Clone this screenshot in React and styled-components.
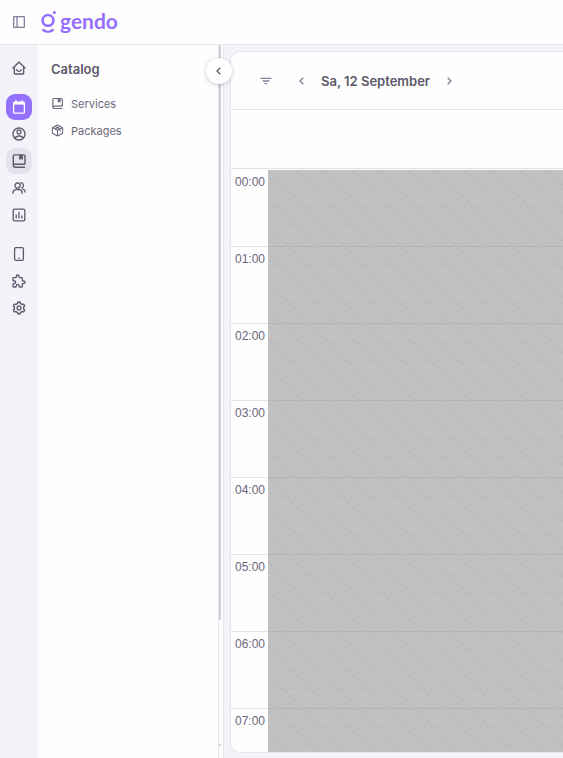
import React from 'react';
import styled, { createGlobalStyle } from 'styled-components';
import {
  BiChevronLeft,
  BiChevronRight,
  BiCog,
  BiDockLeft,
  BiFilter,
  BiHomeSmile,
} from 'react-icons/bi';
import { RiAccountCircleLine } from 'react-icons/ri';
import { TbPuzzle } from 'react-icons/tb';

const GlobalStyle = createGlobalStyle`
  * {
    box-sizing: border-box;
  }

  body {
    margin: 0;
    background-color: #f4f3f9;
    color: #5d596c;
    font-family: Inter, 'Liberation Sans', sans-serif;
    font-size: 13px;
  }

  button {
    padding: 0;
    border: 0;
    background: none;
    color: inherit;
    font: inherit;
    cursor: pointer;
  }
`;

const Page = styled.div`
  display: flex;
  flex-direction: column;
  height: 100vh;
  overflow: hidden;
`;

const TopBar = styled.header`
  display: flex;
  flex: none;
  align-items: center;
  gap: 14px;
  height: 45px;
  padding: 0 11px;
  border-bottom: 1px solid #e8e7ec;
  background-color: #fefefe;
`;

const IconButton = styled.button`
  display: flex;
  align-items: center;
  justify-content: center;
  width: 16px;
  height: 16px;
  color: #85819a;
`;

const LogoLink = styled.a`
  display: flex;
  align-items: center;
  gap: 2px;
  color: #9570fe;
  font-family: Lato, sans-serif;
  font-size: 21px;
  font-weight: 700;
  line-height: 24px;
  text-decoration: none;
`;

const LogoText = styled.span`
  padding-bottom: 2px;
`;

const Body = styled.div`
  display: flex;
  flex: 1;
  min-height: 0;
`;

const Rail = styled.nav`
  display: flex;
  flex: none;
  flex-direction: column;
  align-items: center;
  gap: 1px;
  width: 38px;
  padding-top: 10px;
`;

const RailLink = styled.a`
  display: flex;
  align-items: center;
  justify-content: center;
  width: 26px;
  height: 26px;
  margin-top: ${props => (props.$spaced ? '12px' : '0')};
  border-radius: 9px;
  background-color: ${props => props.$background || 'transparent'};
  color: ${props => props.$color || '#5d596c'};
`;

const SidePanel = styled.aside`
  position: relative;
  display: flex;
  flex: none;
  width: 186px;
  background-color: #fefefe;
`;

const PanelContent = styled.div`
  flex: 1;
  padding: 15px 13px;
`;

const PanelTitle = styled.h2`
  margin: 0 0 12px;
  font-size: 13px;
  font-weight: 600;
  line-height: 18px;
`;

const PanelLink = styled.a`
  display: flex;
  align-items: center;
  gap: 7px;
  height: 27px;
  color: #6b677b;
  font-size: 11px;
  text-decoration: none;
`;

const ScrollTrack = styled.div`
  display: flex;
  flex-direction: column;
  justify-content: space-between;
  width: 6px;
  padding-bottom: 12px;
  border-right: 1px solid #e6e5ee;
  border-left: 1px solid #e2e1e8;
`;

const ScrollThumb = styled.div`
  width: 2px;
  height: 82%;
  border-radius: 2px;
  background-color: #cfcdd8;
`;

const ScrollArrow = styled.div`
  width: 2px;
  height: 2px;
  background-color: #cfcdd8;
`;

const CollapseButton = styled.button`
  position: absolute;
  top: 13px;
  right: -8px;
  display: flex;
  align-items: center;
  justify-content: center;
  width: 26px;
  height: 26px;
  border-radius: 50%;
  background-color: #ffffff;
  box-shadow: 0 1px 4px rgba(75, 70, 92, 0.3);
`;

const Main = styled.main`
  display: flex;
  flex: 1;
  min-width: 0;
  padding: 6px 0 5px 6px;
`;

const Calendar = styled.section`
  display: flex;
  flex: 1;
  flex-direction: column;
  min-width: 0;
  overflow: hidden;
  border: 1px solid #e6e5ec;
  border-right: 0;
  border-radius: 10px 0 0 10px;
  background-color: #fefefe;
`;

const CalendarBar = styled.div`
  display: flex;
  flex: none;
  align-items: center;
  height: 58px;
  padding-left: 27px;
  border-bottom: 1px solid #e6e5ec;
`;

const DateNav = styled.div`
  display: flex;
  align-items: center;
  gap: 11px;
  margin-left: 20px;
`;

const DateTitle = styled.h1`
  margin: 0;
  font-size: 13px;
  font-weight: 600;
  line-height: 20px;
  white-space: nowrap;
`;

const StaffRow = styled.div`
  flex: none;
  height: 59px;
  border-bottom: 1px solid #e2e1e6;
`;

const Schedule = styled.div`
  display: grid;
  flex: 1;
  grid-template-columns: 37px 1fr;
  min-height: 0;
  padding-top: 1px;
  overflow: hidden;
`;

const Hour = styled.div`
  height: 77px;
  padding: 4px 0 0 4px;
  border-bottom: 1px solid #e4e3e8;
  color: #6b677b;
  font-family: 'Liberation Sans', sans-serif;
  font-size: 12px;
  line-height: 16px;
`;

const ClosedDay = styled.div`
  background-color: #c1c1c1;
  background-image: linear-gradient(
    45deg,
    transparent 47%,
    rgba(0, 0, 0, 0.035) 49% 51%,
    transparent 53%
  );
  background-size: 28px 28px;
`;

const ClosedHour = styled.div`
  display: grid;
  grid-template-rows: repeat(4, 1fr);
  height: 77px;
  border-bottom: 1px solid #b5b5b5;
`;

const Slot = styled.div`
  border-bottom: 1px dashed #bbbbbb;

  &:last-child {
    border-bottom: 0;
  }
`;

const LogoMark = () => (
  <svg width='17' height='24' viewBox='0 0 17 24' fill='none' stroke='currentColor' aria-hidden='true'>
    <circle cx='7' cy='10.4' r='5.4' strokeWidth='2.6' />
    <path d='M2.2 20c2.8 2.2 6.800 2.200 9.600 0' strokeWidth='2.400' strokeLinecap='round' />
    <circle cx='13.400' cy='2.400' r='1.500' fill='currentColor' stroke='none' />
  </svg>
);

const CalendarIcon = () => (
  <svg width='16' height='16' viewBox='0 0 16 16' fill='none' stroke='currentColor' aria-hidden='true'>
    <rect x='2.6' y='3.2' width='10.8' height='11' rx='1' strokeWidth='1.3' />
    <path d='M2.6 4.4h10.8' strokeWidth='2.4' />
    <path d='M5 1.3v3M11 1.3v3' strokeWidth='1.4' />
  </svg>
);

const BookIcon = ({ size = 16 }) => (
  <svg width={size} height={size} viewBox='0 0 16 16' fill='none' stroke='currentColor' strokeWidth='1.4' aria-hidden='true'>
    <path d='M14 11.2H3.8a1.5 1.5 0 0 0 0 3H14M2.3 12.7V3.2c0-.8.5-1.3 1.3-1.3h9.1c.8 0 1.3.5 1.3 1.3v8' />
    <path d='M8.7 2v4.3l1.3-.8 1.3.8V2' fill='currentColor' strokeWidth='1' />
  </svg>
);

const TeamIcon = () => (
  <svg width='16' height='16' viewBox='0 0 16 16' fill='none' stroke='currentColor' strokeWidth='1.3' strokeLinecap='round' aria-hidden='true'>
    <circle cx='6.6' cy='5.6' r='2.6' />
    <path d='M2 13.2v-.6c0-1.9 1.4-3 3.2-3h2.7c1.8 0 3.2 1.1 3.2 3v.6' />
    <path d='M9.7 2.7c1.7.1 2.8 1.3 2.7 2.9 0 1.1-.6 2-1.6 2.500M12 9.2c1.4.4 2.2 1.4 2.2 2.9' />
  </svg>
);

const ChartIcon = () => (
  <svg width='16' height='16' viewBox='0 0 16 16' fill='none' stroke='currentColor' strokeWidth='1.3' aria-hidden='true'>
    <rect x='2.2' y='2.2' width='11.6' height='11.6' rx='1.3' />
    <path d='M5.2 7.5v4M8 5v6.5M10.8 8.5v3' />
  </svg>
);

const PhoneIcon = () => (
  <svg width='16' height='16' viewBox='0 0 16 16' fill='none' stroke='currentColor' strokeWidth='1.3' aria-hidden='true'>
    <rect x='3.6' y='1.6' width='8.8' height='12.8' rx='1.4' />
    <circle cx='8' cy='12.3' r='.8' fill='currentColor' stroke='none' />
  </svg>
);

const PackageIcon = () => (
  <svg width='13' height='13' viewBox='0 0 16 16' fill='none' stroke='currentColor' strokeWidth='1.3' strokeLinejoin='round' aria-hidden='true'>
    <path d='M8 1.3l6.3 3.2v7L8 14.7l-6.3-3.2v-7zM1.7 4.5L8 7.8l6.3-3.3M8 7.8v6.9' />
    <path d='M4.8 2.9l6.4 3.3v3M11.2 2.9L4.8 6.2' />
  </svg>
);

const railLinks = [
  { label: 'Home', icon: <BiHomeSmile size={16} /> },
  { label: 'Calendar', icon: <CalendarIcon />, background: '#9570fe', color: '#ffffff', spaced: true },
  { label: 'Clients', icon: <RiAccountCircleLine size={16} /> },
  { label: 'Catalog', icon: <BookIcon />, background: '#e4e2ec' },
  { label: 'Team', icon: <TeamIcon /> },
  { label: 'Reports', icon: <ChartIcon /> },
  { label: 'Online booking', icon: <PhoneIcon />, spaced: true },
  { label: 'Integrations', icon: <TbPuzzle size={16} /> },
  { label: 'Settings', icon: <BiCog size={16} /> },
];

const hours = ['00:00', '01:00', '02:00', '03:00', '04:00', '05:00', '06:00', '07:00'];

const Header = () => (
  <TopBar>
    <IconButton aria-label='Toggle menu'>
      <BiDockLeft size={16} />
    </IconButton>
    <LogoLink href='/'>
      <LogoMark />
      <LogoText>gendo</LogoText>
    </LogoLink>
  </TopBar>
);

const Catalog = () => (
  <SidePanel>
    <PanelContent>
      <PanelTitle>Catalog</PanelTitle>
      <PanelLink href='#services'>
        <BookIcon size={13} />
        Services
      </PanelLink>
      <PanelLink href='#packages'>
        <PackageIcon />
        Packages
      </PanelLink>
    </PanelContent>
    <ScrollTrack>
      <ScrollThumb />
      <ScrollArrow />
    </ScrollTrack>
    <CollapseButton aria-label='Collapse panel'>
      <BiChevronLeft size={16} />
    </CollapseButton>
  </SidePanel>
);

const DayCalendar = () => (
  <Calendar>
    <CalendarBar>
      <IconButton aria-label='Filter'>
        <BiFilter size={18} />
      </IconButton>
      <DateNav>
        <IconButton aria-label='Previous day'>
          <BiChevronLeft size={20} />
        </IconButton>
        <DateTitle>Sa, 12 September</DateTitle>
        <IconButton aria-label='Next day'>
          <BiChevronRight size={20} />
        </IconButton>
      </DateNav>
    </CalendarBar>
    <StaffRow />
    <Schedule>
      <div>
        {hours.map(hour => (
          <Hour key={hour}>{hour}</Hour>
        ))}
      </div>
      <ClosedDay>
        {hours.map(hour => (
          <ClosedHour key={hour}>
            <Slot />
            <Slot />
            <Slot />
            <Slot />
          </ClosedHour>
        ))}
      </ClosedDay>
    </Schedule>
  </Calendar>
);

const App = () => (
  <>
    <GlobalStyle />
    <Page>
      <Header />
      <Body>
        <Rail>
          {railLinks.map(link => (
            <RailLink
              key={link.label}
              href='#'
              aria-label={link.label}
              $background={link.background}
              $color={link.color}
              $spaced={link.spaced}
            >
              {link.icon}
            </RailLink>
          ))}
        </Rail>
        <Catalog />
        <Main>
          <DayCalendar />
        </Main>
      </Body>
    </Page>
  </>
);

export default App;
